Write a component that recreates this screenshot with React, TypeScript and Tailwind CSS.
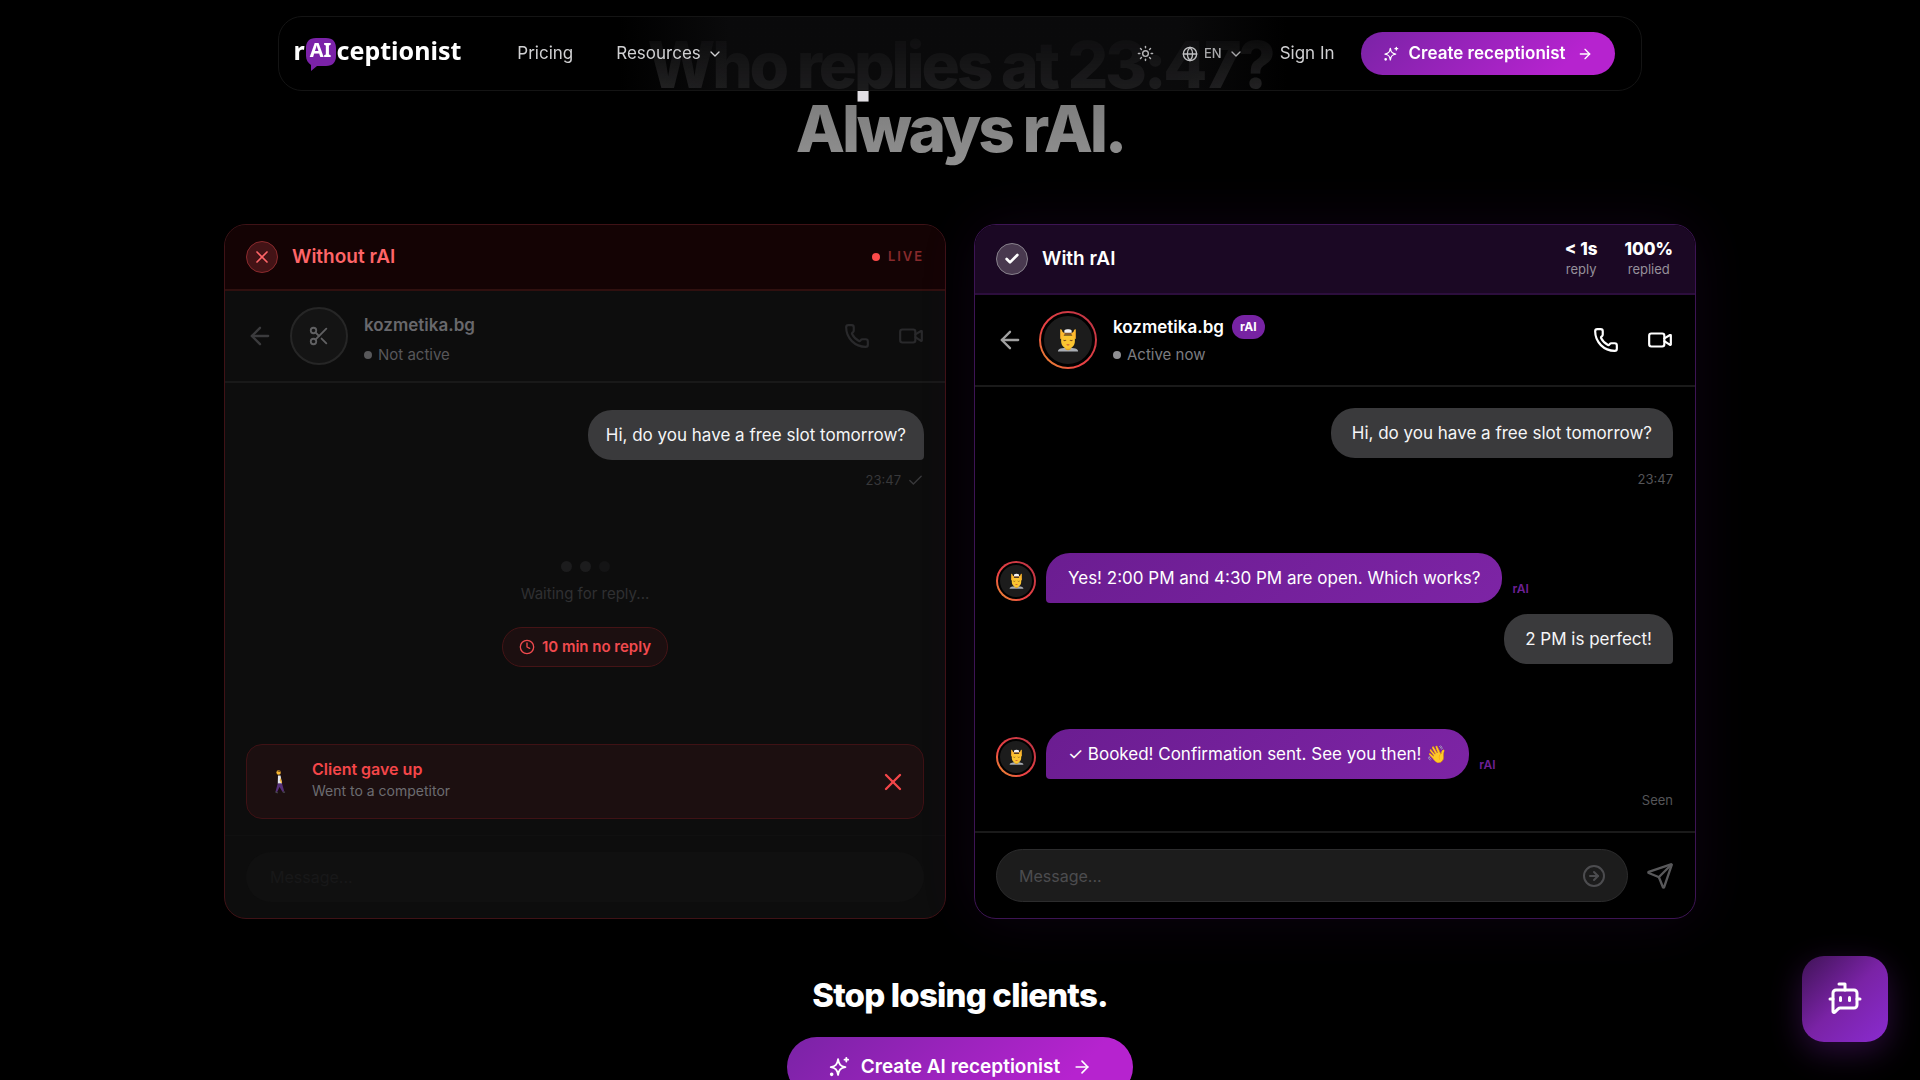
import React from "react";
import {
  ArrowLeft,
  ArrowRight,
  BotMessageSquare,
  Check,
  ChevronDown,
  CircleArrowRight,
  Clock,
  Globe,
  Phone,
  Scissors,
  Send,
  Sun,
  Video,
  X,
} from "lucide-react";

function SparkIcon({ className }: { className: string }) {
  return (
    <svg viewBox="0 0 24 24" className={className} fill="none" stroke="currentColor" strokeWidth="2" strokeLinecap="round" strokeLinejoin="round" aria-hidden="true">
      <path d="M11 3.500c.9 6 2.700 7.700 8 8.600-5.300.9-7.100 2.600-8 8.600-.9-6-2.700-7.700-8-8.600 5.300-.9 7.100-2.600 8-8.600Z" />
      <path d="M20 2v4M22 4h-4" />
      <circle cx="4" cy="20" r="1" />
    </svg>
  );
}

/* Person getting a head massage: face, hair, towel, hands at the temples. */
function MassageFace({ className }: { className: string }) {
  return (
    <svg viewBox="0 0 24 26" className={className} aria-hidden="true">
      <path d="M1 25.500c0-3 4-4 11-4s11 1 11 4Z" fill="#a9adb3" />
      <path d="M9 19h6v4c-1.500 1.500-4.500 1.500-6 0Z" fill="#e0a11f" />
      <path d="M4.500 8h15v6c0 5-3.500 8.500-7.500 8.500S4.500 19 4.500 14Z" fill="#fbc531" />
      <path d="M5 9c1-3.500 4-5 7-5s6 1.500 7 5c-2-1.500-4-1.500-7-1.500S7 7.500 5 9Z" fill="#8a5a2b" />
      <path d="M8 2.500c2-1.500 6-1.500 8 0v2.700H8Z" fill="#f1f1f4" />
      <path d="M3.500 1.500c1.500-.5 2 1 2.500 2.500l2.500 2-2.500 5-2.500 1ZM20.500 1.500c-1.500-.5-2 1-2.500 2.500l-2.500 2 2.500 5 2.500 1Z" fill="#ffb92e" />
      <path d="M7 13c1 .9 2 .9 3 0M14 13c1 .9 2 .9 3 0" stroke="#7a4a1c" strokeWidth="1.100" fill="none" />
      <path d="M10 18.200c1-.8 3-.8 4 0-1 1.200-3 1.200-4 0Z" fill="#c8453a" />
    </svg>
  );
}

function Walker() {
  return (
    <svg viewBox="0 0 12 26" className="h-[24px] w-[12px]" aria-hidden="true">
      <circle cx="4.500" cy="2.800" r="2.400" fill="#f7b731" />
      <path d="M3 1.500c2-2 4-.5 4 1.500L5.500 2Z" fill="#5d3a1a" />
      <path d="M3.800 6h2.800l1.600 9H3.600Z" fill="#e4e6ee" />
      <path d="M6.300 8l2 5.500-1 .8L5.800 11Z" fill="#f7b731" />
      <path d="M3.500 14.500h4.700l2.300 8.500-1.700.8-3.300-5.500-2.700 5.700-1.600-.6Z" fill="#56307a" />
      <path d="M1 23.500l2.500 1.500M9 24h2.500" stroke="#4a4a50" strokeWidth="1.300" />
    </svg>
  );
}

function Logo() {
  return (
    <a href="#" aria-label="rAIceptionist" className="flex items-start pb-1 font-['Noto_Sans',sans-serif] text-[25px] leading-8 font-bold text-white">
      <span>r</span>
      <span className="relative mx-px flex h-9 w-[30px] justify-center">
        <svg viewBox="0 0 30 34" className="absolute top-1 left-0 h-[34px] w-[30px]" aria-hidden="true">
          <path d="M10 0h10c7 0 10 4 10 10v8c0 6-3 10-10 10h-9l-6 5V27C2 25 0 22 0 18v-8C0 4 3 0 10 0Z" fill="#7b22a8" />
        </svg>
        <span className="relative text-[20px]">AI</span>
      </span>
      <span>ceptionist</span>
    </a>
  );
}

function Avatar({ small = false }: { small?: boolean }) {
  return (
    <span
      className={
        small
          ? "flex size-10 shrink-0 items-center justify-center rounded-full bg-[linear-gradient(45deg,#e6a02e,#ef4444_35%,#b83244)] p-[2px]"
          : "flex size-[58px] shrink-0 items-center justify-center rounded-full bg-[linear-gradient(45deg,#e6a02e,#ef4444_35%,#b83244)] p-[2px]"
      }
    >
      <span className={small ? "flex size-full items-center justify-center rounded-full border-2 border-black bg-[#1c1c1c]" : "flex size-full items-center justify-center rounded-full border-[3px] border-black bg-[#1c1c1c]"}>
        <MassageFace className={small ? "h-[18px] w-[15px]" : "h-[26px] w-[22px]"} />
      </span>
    </span>
  );
}

function BotMessage({ children }: { children: React.ReactNode }) {
  return (
    <div className="flex items-end gap-[10px]">
      <div className="pb-[2px]">
        <Avatar small />
      </div>
      <p className="rounded-[24px] rounded-bl-[4px] bg-[linear-gradient(135deg,#6b1d91,#7d24a5)] px-[22px] py-3 text-[17px] leading-[26px] text-white">
        {children}
      </p>
      <span className="pb-[6px] text-xs leading-4 font-semibold text-[#6f2096]">rAI</span>
    </div>
  );
}

function WithoutCard() {
  return (
    <article className="flex flex-col overflow-hidden rounded-[22px] border border-[#3f1216] bg-[#0d0d0d]">
      <header className="flex h-[66px] items-center border-b-2 border-[#30100f] bg-[#140304] px-[21px]">
        <span className="flex size-8 items-center justify-center rounded-full border border-[#8a2a2d] bg-[#431316] text-[#ff6568]">
          <X className="size-5" strokeWidth={2} />
        </span>
        <h3 className="ml-[14px] flex-1 text-[19px] font-semibold text-[#ff6568]">Without rAI</h3>
        <span className="size-2 rounded-full bg-[#fb4a4a]" />
        <span className="ml-2 text-[13px] font-semibold tracking-[0.15em] text-[#872a2c]">LIVE</span>
      </header>
      <div className="flex h-[92px] items-center border-b-2 border-[#191919] px-[21px]">
        <button aria-label="Back" className="text-[#3b3b3d]">
          <ArrowLeft className="size-7" />
        </button>
        <span className="ml-4 flex size-[58px] items-center justify-center rounded-full border-2 border-[#262626] bg-[#141414] text-[#606062]">
          <Scissors className="size-[22px]" strokeWidth={2} />
        </span>
        <div className="ml-4 flex-1 pt-[6px]">
          <p className="text-[17px] leading-6 font-semibold text-[#68686c]">kozmetika.bg</p>
          <p className="mt-2 flex items-center gap-[6px] text-[15px] leading-5 text-[#57575a]">
            <span className="size-2 rounded-full bg-[#58585a]" />
            Not active
          </p>
        </div>
        <button aria-label="Call" className="mr-7 text-[#29292b]">
          <Phone className="size-[26px]" strokeWidth={2} />
        </button>
        <button aria-label="Video call" className="text-[#29292b]">
          <Video className="size-[26px]" strokeWidth={2} />
        </button>
      </div>
      <div className="flex flex-1 flex-col px-[21px] pt-[27px]">
        <p className="self-end rounded-[24px] rounded-br-[4px] bg-[#3a3a3c] px-[18px] py-3 text-[17px] leading-[26px] text-[#f5f5f7]">
          Hi, do you have a free slot tomorrow?
        </p>
        <p className="mt-[10px] flex items-center gap-[6px] self-end text-[13px] leading-5 text-[#38383a]">
          23:47
          <Check className="size-[17px]" strokeWidth={2} />
        </p>
        <div className="mt-[71px] flex flex-col items-center">
          <div className="flex gap-2">
            <span className="size-[11px] rounded-full bg-[#1c1c1d]" />
            <span className="size-[11px] rounded-full bg-[#1c1c1d]" />
            <span className="size-[11px] rounded-full bg-[#141415]" />
          </div>
          <p className="mt-3 text-[15px] leading-5 text-[#303032]">Waiting for reply...</p>
          <p className="mt-[23px] flex h-10 items-center gap-[7px] rounded-full border border-[#451416] bg-[#1c0f10] px-4 text-[15px] font-semibold text-[#f04a4e]">
            <Clock className="size-4" strokeWidth={2} />
            10 min no reply
          </p>
        </div>
        <div className="mt-[77px] flex h-[75px] items-center rounded-2xl border border-[#3f1215] bg-[#1c0f10] pr-4 pl-[27px]">
          <span className="w-[38px]">
            <Walker />
          </span>
          <div className="flex-1 pb-[6px]">
            <p className="text-base leading-6 font-semibold text-[#f44649]">Client gave up</p>
            <p className="text-[14px] leading-5 text-[#6c6c70]">Went to a competitor</p>
          </div>
          <X className="size-7 text-[#f44649]" strokeWidth={2} />
        </div>
      </div>
      <div className="mt-4 border-t border-[#101010] px-[21px] pt-4 pb-4">
        <input aria-label="Message, chat not active" placeholder="Message..." disabled className="block h-[50px] w-full rounded-full bg-[#101010] px-6 text-base placeholder:text-[#181819]" />
      </div>
    </article>
  );
}

function WithCard() {
  return (
    <article className="flex flex-col overflow-hidden rounded-[22px] border border-[#3d1454] bg-black shadow-[0_0_60px_rgba(123,34,168,0.1)]">
      <header className="flex h-[70px] items-center border-b-2 border-[#2c0e3d] bg-[#1b0824] pr-[22px] pl-[21px]">
        <span className="flex size-8 items-center justify-center rounded-full border border-[#88828c] bg-[#49394f] text-white">
          <Check className="size-4" strokeWidth={4} />
        </span>
        <h3 className="ml-[14px] flex-1 text-[19px] font-semibold text-white">With rAI</h3>
        <dl className="flex gap-[27px] text-center">
          <div className="flex flex-col-reverse">
            <dt className="text-[13px] leading-5 text-[#96909a]">reply</dt>
            <dd className="text-[17px] leading-5 font-extrabold text-white">&lt; 1s</dd>
          </div>
          <div className="flex flex-col-reverse">
            <dt className="text-[13px] leading-5 text-[#96909a]">replied</dt>
            <dd className="text-[17px] leading-5 font-extrabold text-white">100%</dd>
          </div>
        </dl>
      </header>
      <div className="flex h-[92px] items-center border-b-2 border-[#1a1a1a] pr-[22px] pl-[21px]">
        <button aria-label="Back" className="text-[#a1a1a1]">
          <ArrowLeft className="size-7" />
        </button>
        <span className="ml-[15px] flex">
          <Avatar />
        </span>
        <div className="ml-4 flex-1">
          <p className="flex items-center gap-2 text-[17px] leading-6 font-semibold text-white">
            kozmetika.bg
            <span className="rounded-full bg-[#7723a3] px-2 text-xs leading-6 font-bold">rAI</span>
          </p>
          <p className="mt-[6px] flex items-center gap-[6px] text-[15px] leading-5 text-[#7c7c80]">
            <span className="size-2 rounded-full bg-[#8e8e91]" />
            Active now
          </p>
        </div>
        <button aria-label="Call" className="mr-7 text-white">
          <Phone className="size-[26px]" strokeWidth={2} />
        </button>
        <button aria-label="Video call" className="text-white">
          <Video className="size-[26px]" strokeWidth={2} />
        </button>
      </div>
      <div className="flex flex-1 flex-col pr-[22px] pl-[21px] pt-[21px]">
        <p className="self-end rounded-[24px] rounded-br-[4px] bg-[#3a3a3c] px-[21px] py-3 text-[17px] leading-[26px] text-[#f5f5f7]">
          Hi, do you have a free slot tomorrow?
        </p>
        <p className="mt-[11px] self-end text-[13px] leading-5 text-[#555558]">23:47</p>
        <div className="mt-[64px]">
          <BotMessage>Yes! 2:00 PM and 4:30 PM are open. Which works?</BotMessage>
        </div>
        <p className="mt-[11px] self-end rounded-[24px] rounded-br-[4px] bg-[#3a3a3c] px-[21px] py-3 text-[17px] leading-[26px] text-[#f5f5f7]">
          2 PM is perfect!
        </p>
        <div className="mt-[65px]">
          <BotMessage>✓ Booked! Confirmation sent. See you then! 👋</BotMessage>
        </div>
        <p className="mt-[11px] self-end text-[13px] leading-5 text-[#555558]">Seen</p>
      </div>
      <form className="flex items-center gap-[18px] border-t-2 border-[#1a1a1a] px-[21px] py-4">
        <div className="relative flex-1">
          <input aria-label="Message" placeholder="Message..." className="block h-[53px] w-full rounded-full border border-[#2c2c2d] bg-[#1c1c1c] pr-14 pl-[22px] text-base placeholder:text-[#4c4c4f]" />
          <CircleArrowRight className="absolute top-1/2 right-[22px] size-6 -translate-y-1/2 text-[#4c4c4f]" strokeWidth={2} />
        </div>
        <button type="button" aria-label="Send" className="text-[#58585a]">
          <Send className="size-7" strokeWidth={2} />
        </button>
      </form>
    </article>
  );
}

function Nav() {
  return (
    <nav className="fixed inset-x-0 top-4 z-10 mx-auto flex h-[75px] w-[71%] items-center rounded-[24px] border border-[#141414] bg-[linear-gradient(to_right,transparent_25%,rgba(20,20,22,0.5)_33%,rgba(20,20,22,0.5)_66%,transparent_74%),linear-gradient(to_bottom,rgba(0,0,0,0.97)_25%,rgba(0,0,0,0.84))] pr-[26px] pl-[14px]">
      <Logo />
      <a href="#pricing" className="ml-[56px] text-[17px] text-[#d0d0d2]">Pricing</a>
      <button className="ml-[43px] flex items-center gap-[6px] text-[17px] text-[#d0d0d2]">
        Resources
        <ChevronDown className="size-4" />
      </button>
      <div className="ml-auto flex items-center">
        <button aria-label="Toggle theme" className="text-[#b4b4b6]">
          <Sun className="size-[17px]" strokeWidth={2} />
        </button>
        <button className="ml-[28px] flex items-center gap-[6px] text-[13px] font-medium text-[#a8a8aa]">
          <Globe className="size-4 text-[#c0c0c2]" strokeWidth={2} />
          EN
          <ChevronDown className="size-4" />
        </button>
        <a href="#signin" className="ml-[36px] text-[17px] text-[#d0d0d2]">Sign In</a>
        <button className="ml-[26px] flex h-[43px] items-center rounded-full bg-[linear-gradient(135deg,#7a23a6,#b623cf_80%)] px-[22px] text-[17px] font-semibold text-white">
          <SparkIcon className="mr-[10px] size-4" />
          Create receptionist
          <ArrowRight className="ml-[11px] size-4" strokeWidth={2} />
        </button>
      </div>
    </nav>
  );
}

export default function App() {
  return (
    <div className="h-screen overflow-y-auto bg-black font-[Inter,sans-serif] [scrollbar-width:none]">
      <Nav />
      <main className="mx-auto flex w-full max-w-[1472px] flex-col items-center pt-[33px] pb-24">
        <h2 className="text-center text-[64px] leading-none font-extrabold tracking-tighter">
          <span className="block text-[#e2dfe4]">Who replies at 23:47?</span>
          <span className="block bg-linear-to-b from-[#7c7c7c] to-[#949494] bg-clip-text pb-4 text-transparent">Always rAI.</span>
        </h2>
        <section className="mt-[47px] grid w-full grid-cols-2 gap-7">
          <WithoutCard />
          <WithCard />
        </section>
        <h2 className="mt-[56px] text-center text-[33px] leading-10 font-extrabold tracking-tight text-white">Stop losing clients.</h2>
        <button className="mt-[22px] flex h-[60px] items-center rounded-full bg-[linear-gradient(135deg,#7a23a6,#b623cf_80%)] px-[41px] text-[19px] font-semibold text-white">
          <SparkIcon className="mr-[11px] size-[22px]" />
          Create AI receptionist
          <ArrowRight className="ml-3 size-5" strokeWidth={2} />
        </button>
      </main>
      <button aria-label="Open chat assistant" className="fixed right-8 bottom-[38px] flex size-[86px] items-center justify-center rounded-[22px] bg-[linear-gradient(135deg,#3f1356,#7a23a6_50%,#8a2bd0)] text-white shadow-[0_10px_32px_rgba(123,34,168,0.35)]">
        <BotMessageSquare className="size-9" strokeWidth={2} />
      </button>
    </div>
  );
}
